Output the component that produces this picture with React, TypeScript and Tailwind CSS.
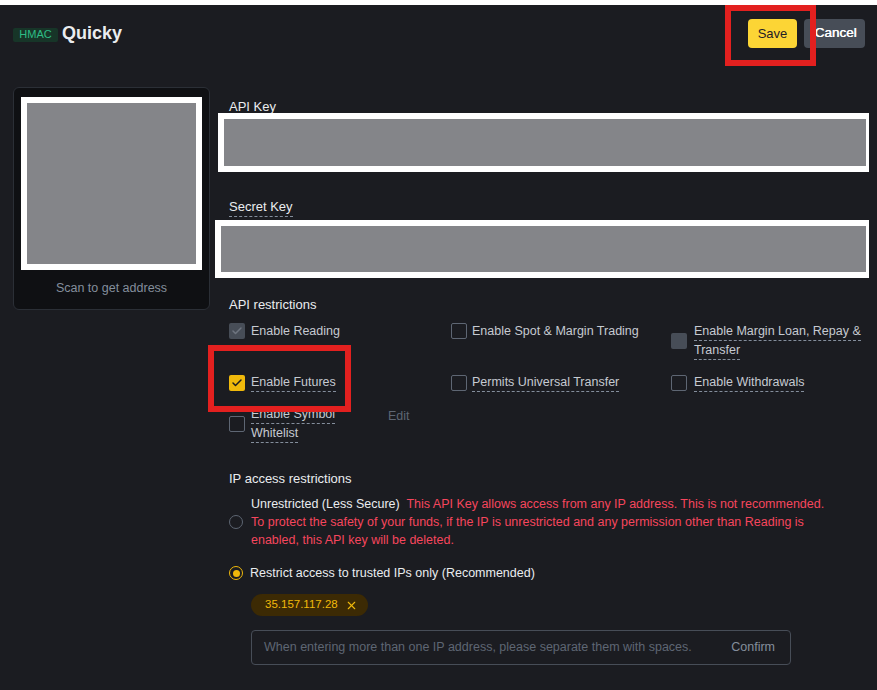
import { Check, X } from 'lucide-react'
import type { JSX, ReactNode } from 'react'

const Dashed = ({ children }: { children: ReactNode }): JSX.Element => (
	<span className="block w-fit border-b border-dashed border-[#848e9c] leading-[18px]">{children}</span>
)

type BoxKind = 'empty' | 'disabled-checked' | 'disabled' | 'checked'

const CheckBox = ({ kind }: { kind: BoxKind }): JSX.Element => {
	if (kind === 'checked')
		return (
			<span className="flex h-4 w-4 shrink-0 items-center justify-center rounded-[2px] bg-[#f0b90b]">
				<Check className="h-3 w-3 text-[#1b1c21]" strokeWidth={3} />
			</span>
		)
	if (kind === 'disabled-checked')
		return (
			<span className="flex h-4 w-4 shrink-0 items-center justify-center rounded-[2px] bg-[#474d57]">
				<Check className="h-3 w-3 text-[#6f7580]" strokeWidth={3} />
			</span>
		)
	if (kind === 'disabled') return <span className="h-4 w-4 shrink-0 rounded-[2px] bg-[#474d57]" />
	return <span className="h-4 w-4 shrink-0 rounded-[2px] border border-[#5e6673]" />
}

export default function App(): JSX.Element {
	return (
		<div className="relative h-[690px] w-[877px] overflow-hidden bg-[#1b1c21] font-['Liberation_Sans',sans-serif] text-[12.5px] text-[#c6cad1]">
			<div className="h-[5px] bg-white" />

			<header className="mt-[14px] flex h-[29px] items-center justify-between pl-[13px] pr-[12px]">
				<div className="flex items-center gap-1">
					<span className="mt-[2px] flex h-[14px] w-[45px] items-center justify-center rounded-[2px] bg-[#173528] text-[11px] text-[#2ebd85]">
						HMAC
					</span>
					<h1 className="-mt-[2px] text-[18px] font-bold leading-none text-[#eaecef]">Quicky</h1>
				</div>
				<div className="flex gap-[7px]">
					<button className="h-[29px] w-[49px] rounded-[4px] bg-[#fcd535] text-[13px] text-[#1e2026]">Save</button>
					<button className="h-[29px] w-[61px] rounded-[4px] bg-[#474d57] pl-[2px] text-[13.5px] text-white [text-shadow:0.4px_0_0_#fff]">
						Cancel
					</button>
				</div>
			</header>

			<div className="mt-[39px] flex pl-[13px] pr-[8px]">
				<div className="flex h-[223px] w-[197px] shrink-0 flex-col items-center rounded-[6px] border border-[#2b2f36] bg-[#0f1013] pt-[9px]">
					<div className="h-[173px] w-[181px] border-[6px] border-white bg-[#848589]" />
					<p className="mt-[9px] leading-[18px] text-[#848e9c]">Scan to get address</p>
				</div>

				<div className="ml-[5px] flex-1">
					<div className="h-[26px] pl-[14px] pt-[11px] text-[13px] leading-[18px] text-[#eaecef]">API Key</div>
					<div className="relative ml-[3px] h-[59px] border-[6px] border-r-[3px] border-white bg-[#848589]" />

					<div className="mt-[26px] pl-[14px] text-[13px] text-[#eaecef]">
						<Dashed>Secret Key</Dashed>
					</div>
					<div className="relative mt-[3px] h-[58px] border-[6px] border-r-[3px] border-white bg-[#848589]" />

					<div className="mt-[18px] pl-[14px] text-[13px] leading-[18px] text-[#eaecef]">API restrictions</div>

					<div className="mt-[8px] grid grid-cols-[222px_220px_1fr] items-start gap-y-[13px] pl-[14px] leading-[18px]">
						<div className="flex items-center gap-[6px]">
							<CheckBox kind="disabled-checked" />
							<span>Enable Reading</span>
						</div>
						<div className="flex items-center gap-[5px]">
							<CheckBox kind="empty" />
							<span>Enable Spot &amp; Margin Trading</span>
						</div>
						<div className="flex items-center gap-[7px]">
							<CheckBox kind="disabled" />
							<span>
								<Dashed>Enable Margin Loan, Repay &amp;</Dashed>
								<Dashed>Transfer</Dashed>
							</span>
						</div>

						<div className="flex items-center gap-[6px]">
							<CheckBox kind="checked" />
							<Dashed>Enable Futures</Dashed>
						</div>
						<div className="flex items-center gap-[5px]">
							<CheckBox kind="empty" />
							<Dashed>Permits Universal Transfer</Dashed>
						</div>
						<div className="flex items-center gap-[7px]">
							<CheckBox kind="empty" />
							<Dashed>Enable Withdrawals</Dashed>
						</div>

						<div className="col-span-3 flex items-center gap-[6px]">
							<CheckBox kind="empty" />
							<span className="w-[131px]">
								<Dashed>Enable Symbol</Dashed>
								<Dashed>Whitelist</Dashed>
							</span>
							<span className="mt-[2px] self-start text-[#5e6673]">Edit</span>
						</div>
					</div>

					<div className="mt-[27px] pl-[14px] text-[13px] leading-[18px] text-[#eaecef]">IP access restrictions</div>

					<div className="mt-[7px] flex items-center gap-2 pl-[14px] leading-[18px]">
						<span className="h-[14px] w-[14px] shrink-0 rounded-full border-[1.5px] border-[#5e6673]" />
						<p className="text-[#f6465d]">
							<span className="text-[#eaecef]">Unrestricted (Less Secure)</span>&nbsp; This API Key allows access from any IP
							address. This is not recommended.
							<br />
							To protect the safety of your funds, if the IP is unrestricted and any permission other than Reading is
							<br />
							enabled, this API key will be deleted.
						</p>
					</div>

					<div className="mt-[15px] flex items-center gap-[7px] pl-[14px] leading-[18px]">
						<span className="flex h-[14px] w-[14px] shrink-0 items-center justify-center rounded-full border-[1.5px] border-[#f0b90b]">
							<span className="h-[7px] w-[7px] rounded-full bg-[#f0b90b]" />
						</span>
						<span className="text-[#eaecef]">Restrict access to trusted IPs only (Recommended)</span>
					</div>

					<div className="mt-[12px] pl-[36px]">
						<span className="inline-flex h-[22px] items-center gap-[7px] rounded-full bg-[#3c2a04] pl-[14px] pr-[10px] text-[11.5px] text-[#f0b90b]">
							35.157.117.28
							<X className="h-[13px] w-[13px]" strokeWidth={2} />
						</span>
					</div>

					<div className="ml-[36px] mt-[14px] flex h-[35px] w-[540px] items-center justify-between rounded-[4px] border border-[#474d57] pl-[12px] pr-[15px]">
						<span className="text-[#5e6673]">When entering more than one IP address, please separate them with spaces.</span>
						<span className="text-[#848e9c]">Confirm</span>
					</div>
				</div>
			</div>

			<div className="absolute left-[725px] top-[5px] h-[61px] w-[91px] border-[6px] border-[#e3201f]" />
			<div className="absolute left-[208px] top-[345px] h-[67px] w-[143px] border-[6px] border-[#e3201f]" />
		</div>
	)
}
